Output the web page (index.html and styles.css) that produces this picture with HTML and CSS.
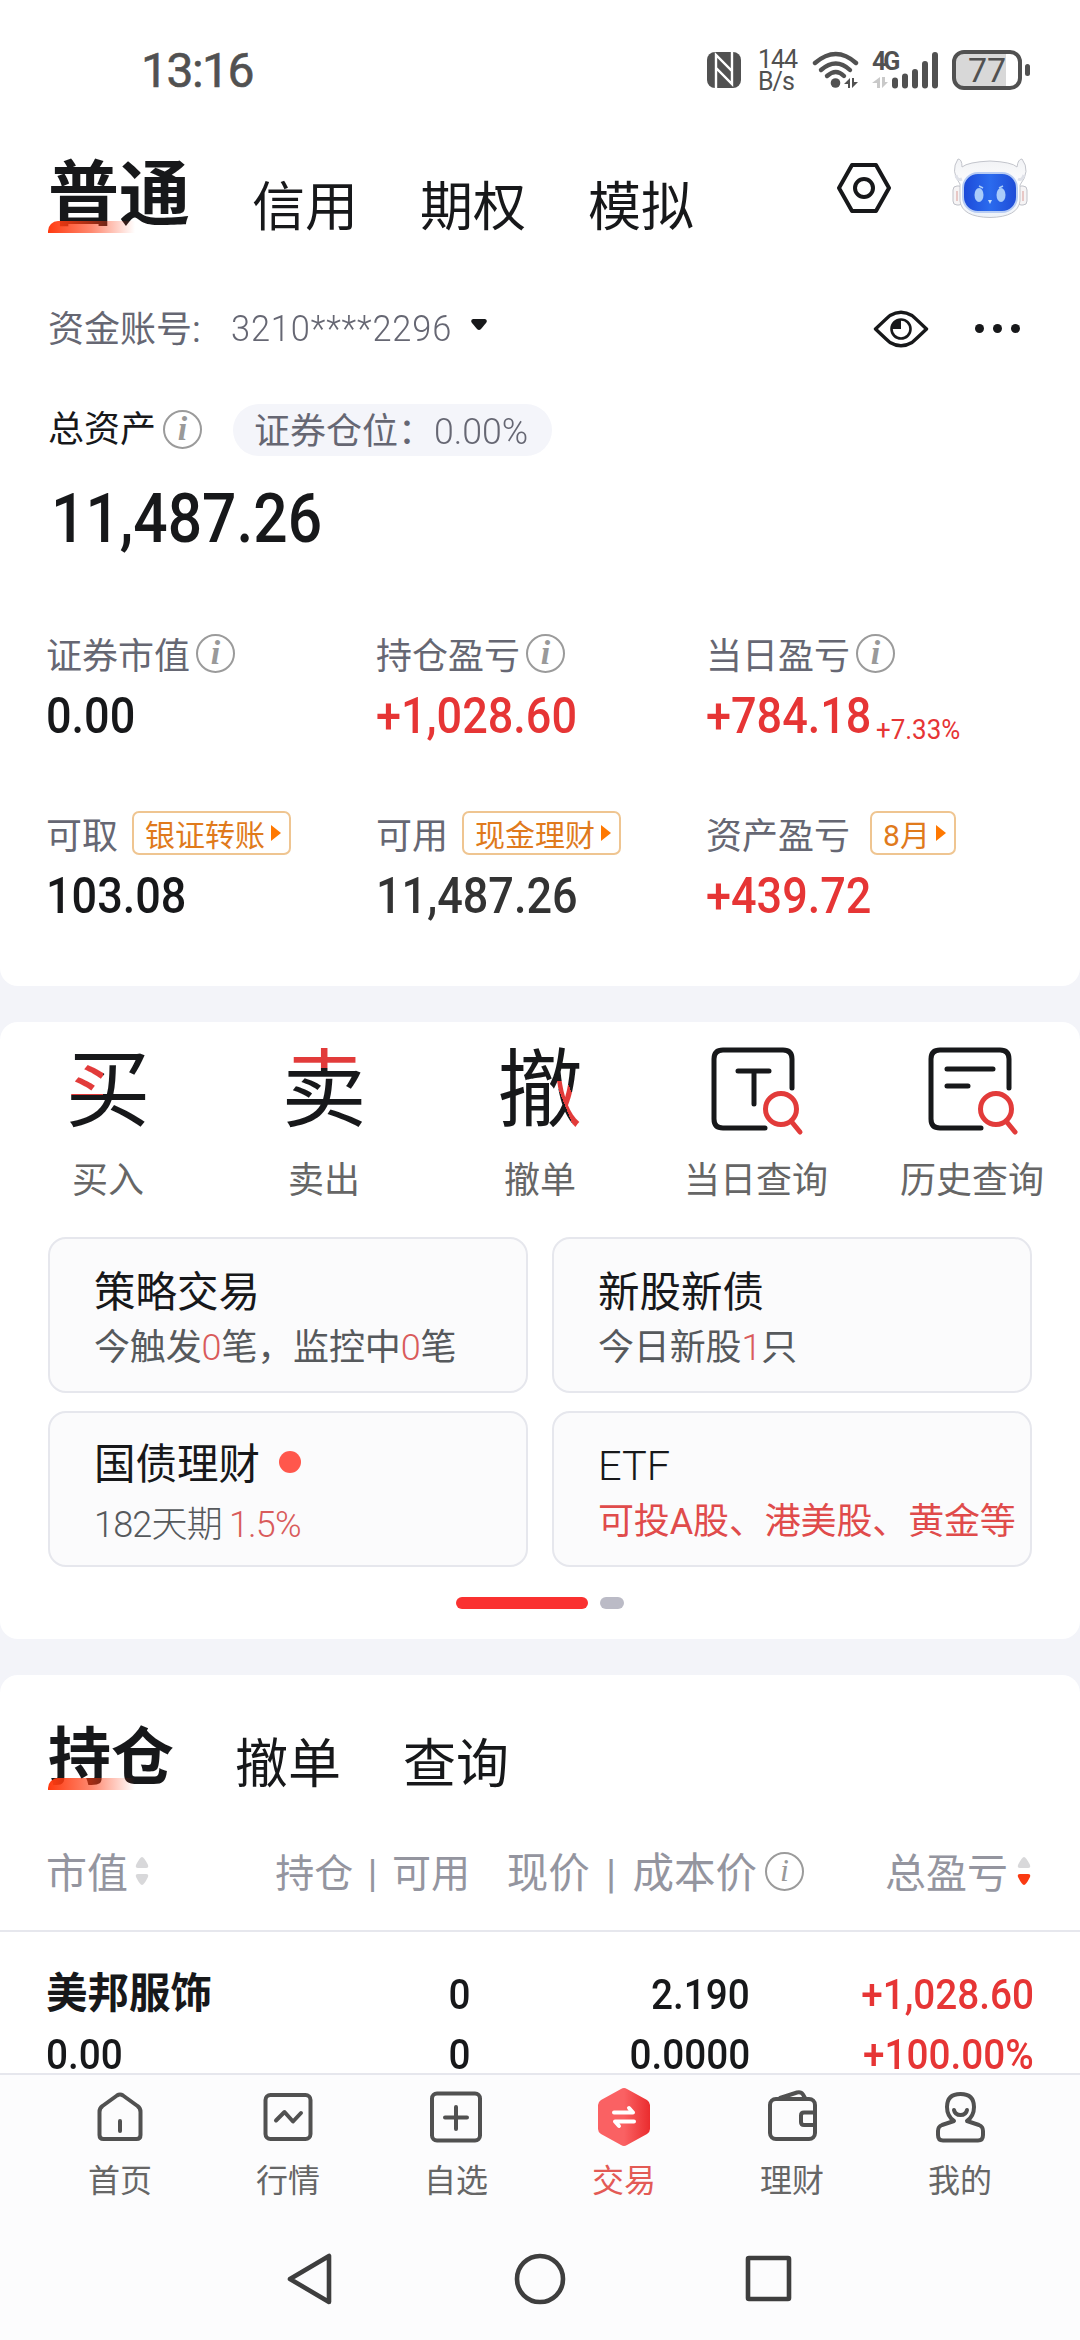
FILE: index.html
```
<!DOCTYPE html>
<html lang="zh-CN">
<head>
    <meta charset="UTF-8">
    <meta name="viewport" content="width=device-width, initial-scale=1.0">
    <title>交易</title>
    <link rel="stylesheet" href="styles.css">
</head>
<body>

    <div class="card account">
        <div class="status-bar">
            <div class="clock">13:16</div>
            <div class="status-icons">
                <svg class="nfc" width="34" height="36" viewBox="0 0 34 36">
                    <rect x="0" y="0" width="34" height="36" rx="8" fill="#515151"/>
                    <path d="M9 36V3l16 16V8M25 0v32L9 16v12" fill="none" stroke="#fff" stroke-width="2.4"/>
                </svg>
                <div class="speed"><div>144</div><div>B/s</div></div>
                <svg class="wifi" width="48" height="38" viewBox="0 0 48 38">
                    <g fill="none" stroke="#515151" stroke-width="4.4" stroke-linecap="round">
                        <path d="M3 12Q24-6 44 12"/>
                        <path d="M9 19Q24 6 38 19"/>
                        <path d="M15 25Q24 17 32 25"/>
                    </g>
                    <circle cx="23.500" cy="32" r="4.800" fill="#515151"/>
                    <path d="M38 27v10h-2v-4h-4zM40 27v10l6-6h-4v-4z" fill="#515151"/>
                </svg>
                <div class="mobile">
                    <span class="net">4G</span>
                    <svg width="68" height="38" viewBox="0 0 68 38">
                        <path d="M8 26v11H5v-5H0zM10 26v11l6-6h-3v-5z" fill="#c9c9c9"/>
                        <g stroke="#515151" stroke-width="6" stroke-linecap="round">
                            <path d="M23 29.500v5M33 25.500v9M43 21v13.500M53 13v21.500M63 4v30.500"/>
                        </g>
                    </svg>
                </div>
                <div class="battery"><span>77</span></div>
                <div class="battery-tip"></div>
            </div>
        </div>

        <div class="top-tabs">
            <div class="tab active">普通</div>
            <div class="tab">信用</div>
            <div class="tab">期权</div>
            <div class="tab">模拟</div>
            <svg class="setting" width="54" height="50" viewBox="0 0 54 50" fill="none" stroke="#17181a" stroke-width="4" stroke-linejoin="round">
                <path d="M15 2h24l13 23-13 23H15L2 25z"/>
                <circle cx="27" cy="25" r="9"/>
            </svg>
            <svg class="robot" width="76" height="62" viewBox="0 0 76 62">
                <defs>
                    <linearGradient id="face" x1="0" y1="0" x2="1" y2="0">
                        <stop offset="0" stop-color="#1c49d8"/>
                        <stop offset=".5" stop-color="#2b6bee"/>
                        <stop offset="1" stop-color="#1e4bd6"/>
                    </linearGradient>
                    <linearGradient id="shell" x1="0" y1="0" x2="0" y2="1">
                        <stop offset="0" stop-color="#f1f2f5"/>
                        <stop offset=".5" stop-color="#fff"/>
                        <stop offset="1" stop-color="#eef2f8"/>
                    </linearGradient>
                </defs>
                <rect x="1" y="29" width="10" height="19" rx="4" fill="#f6f4f5" stroke="#bfc1c8"/>
                <rect x="65" y="29" width="10" height="19" rx="4" fill="#f6f4f5" stroke="#bfc1c8"/>
                <path d="M5 34v10M71 34v10" stroke="#e4b9b6" stroke-width="1.500"/>
                <path d="M8 27Q-2 14 6 2Q10 2 10 10Q16 5 38 4Q60 5 65 10Q66 2 70 2Q79 14 68 28V44Q66 60 38 60.500Q10 60 8 44Z" fill="url(#shell)" stroke="#c3c5cc"/>
                <path d="M4 18Q5 24 10 22M72 18Q70 24 66 22" fill="none" stroke="#dfe1e8" stroke-width="3"/>
                <rect x="11" y="16" width="54" height="39" rx="15" fill="url(#face)" stroke="#b9cdf3" stroke-width="2"/>
                <ellipse cx="27" cy="38" rx="4.500" ry="7" fill="#a9ccfa"/>
                <ellipse cx="49" cy="38" rx="4.500" ry="7" fill="#a9ccfa"/>
                <path d="M27 29l4 2M51 29l-4 2" stroke="#a9ccfa" stroke-width="1.500"/>
                <path d="M36 43h4l-2 4z" fill="#c4ddfb"/>
            </svg>
        </div>

        <div class="account-row">
            <span class="account-label">资金账号:</span>
            <span class="num light account-no">3210****2296</span>
            <svg class="caret" width="16" height="11" viewBox="0 0 16 11"><path d="M2 0h12q3 1 1 4l-5 6q-2 2-4 0L1 4Q-1 1 2 0z" fill="#17181a"/></svg>
            <svg class="eye" width="56" height="38" viewBox="0 0 56 38">
                <path d="M2.500 19Q14 8 17 5.500Q28-1 39 5.500Q42 8 53.500 19Q42 30 39 32.500Q28 39 17 32.500Q14 30 2.500 19z" fill="none" stroke="#17181a" stroke-width="3.400" stroke-linejoin="round"/>
                <circle cx="28" cy="19" r="9.500" fill="none" stroke="#17181a" stroke-width="2.600"/>
                <path d="M28 19v-9.500A9.500 9.500 0 0 0 18.500 19z" fill="#17181a"/>
            </svg>
            <div class="dots"><i></i><i></i><i></i></div>
        </div>

        <div class="total-row">
            <span>总资产</span>
            <span class="info">i</span>
            <span class="pill">证券仓位：<span class="num light">0.00%</span></span>
        </div>
        <div class="total"><span class="num">11,487.26</span></div>

        <div class="assets">
            <div class="asset">
                <div class="label">证券市值<span class="info">i</span></div>
                <div class="value"><span class="num">0.00</span></div>
            </div>
            <div class="asset">
                <div class="label">持仓盈亏<span class="info">i</span></div>
                <div class="value red"><span class="num">+1,028.60</span></div>
            </div>
            <div class="asset">
                <div class="label">当日盈亏<span class="info">i</span></div>
                <div class="value red"><span class="num">+784.18</span><span class="num rate">+7.33%</span></div>
            </div>
            <div class="asset">
                <div class="label">可取<span class="tag">银证转账<i></i></span></div>
                <div class="value"><span class="num">103.08</span></div>
            </div>
            <div class="asset">
                <div class="label">可用<span class="tag">现金理财<i></i></span></div>
                <div class="value grey"><span class="num">11,487.26</span></div>
            </div>
            <div class="asset">
                <div class="label">资产盈亏<span class="tag month">8月<i></i></span></div>
                <div class="value red"><span class="num">+439.72</span></div>
            </div>
        </div>
    </div>

    <div class="card trade">
        <div class="actions">
            <div class="action">
                <div class="glyph buy">买</div>
                <div>买入</div>
            </div>
            <div class="action">
                <div class="glyph sell">卖</div>
                <div>卖出</div>
            </div>
            <div class="action">
                <div class="glyph cancel">撤</div>
                <div>撤单</div>
            </div>
            <div class="action">
                <div class="query">
                    <svg width="100" height="90" viewBox="0 0 100 90" fill="none" stroke-width="5" stroke-linecap="round">
                        <path d="M86 42V13Q86 4 77 4H17Q8 4 8 13V73Q8 82 17 82H59" stroke="#17181a"/>
                        <path d="M32 25H63M48 25V58" stroke="#17181a"/>
                        <circle cx="75" cy="63" r="15.500" stroke="#e23b3a"/>
                        <path d="M85 75L94 86" stroke="#e23b3a"/>
                    </svg>
                </div>
                <div>当日查询</div>
            </div>
            <div class="action">
                <div class="query">
                    <svg width="100" height="90" viewBox="0 0 100 90" fill="none" stroke-width="5" stroke-linecap="round">
                        <path d="M87 42V13Q87 4 78 4H18Q9 4 9 13V73Q9 82 18 82H59" stroke="#17181a"/>
                        <path d="M25 23H71M25 40H46" stroke="#17181a"/>
                        <circle cx="74" cy="63" r="15.500" stroke="#e23b3a"/>
                        <path d="M84 75L93 86" stroke="#e23b3a"/>
                    </svg>
                </div>
                <div>历史查询</div>
            </div>
        </div>

        <div class="entries">
            <div class="entry">
                <div class="title">策略交易</div>
                <div class="sub">今触发<b>0</b>笔，监控中<b>0</b>笔</div>
            </div>
            <div class="entry">
                <div class="title">新股新债</div>
                <div class="sub">今日新股<b>1</b>只</div>
            </div>
            <div class="entry low">
                <div class="title">国债理财<span class="dot"></span></div>
                <div class="sub">182天期 <b>1.5%</b></div>
            </div>
            <div class="entry etf">
                <div class="title">ETF</div>
                <div class="sub hot">可投A股、港美股、黄金等</div>
            </div>
        </div>
        <div class="pager"><i class="on"></i><i></i></div>
    </div>

    <div class="card holdings">
        <div class="top-tabs small">
            <div class="tab active">持仓</div>
            <div class="tab">撤单</div>
            <div class="tab">查询</div>
        </div>
        <div class="row head">
            <div class="c1"><span>市值</span><svg class="sort" width="14" height="28" viewBox="0 0 14 28"><path class="up" d="M7 0q2 0 6 8 1 3-2 3H3q-3 0-2-3Q5 0 7 0z"/><path d="M7 28q2 0 6-8 1-3-2-3H3q-3 0-2 3 4 8 6 8z"/></svg></div>
            <div class="c2"><span>持仓 | 可用</span></div>
            <div class="c3"><span>现价 | 成本价</span><span class="info">i</span></div>
            <div class="c4"><span>总盈亏</span><svg class="sort desc" width="14" height="28" viewBox="0 0 14 28"><path class="up" d="M7 0q2 0 6 8 1 3-2 3H3q-3 0-2-3Q5 0 7 0z"/><path d="M7 28q2 0 6-8 1-3-2-3H3q-3 0-2 3 4 8 6 8z"/></svg></div>
        </div>
        <div class="row stock">
            <div class="name">美邦服饰</div>
            <div><span class="num">0</span></div>
            <div><span class="num">2.190</span></div>
            <div class="red"><span class="num">+1,028.60</span></div>
            <div class="left"><span class="num">0.00</span></div>
            <div><span class="num">0</span></div>
            <div><span class="num">0.0000</span></div>
            <div class="red"><span class="num">+100.00%</span></div>
        </div>
    </div>

    <div class="bottom">
        <div class="tabbar">
            <div class="item">
                <svg width="60" height="60" viewBox="0 0 60 60">
                    <path d="M9.500 25q0-4 3-6L27 8.500q3-2 6 0L47.500 19q3 2 3 6V48q0 4-4 4H13.500q-4 0-4-4zM30 34V44"/>
                </svg>
                首页
            </div>
            <div class="item">
                <svg width="60" height="60" viewBox="0 0 60 60">
                    <rect x="7.500" y="8" width="45" height="44" rx="5"/>
                    <path d="M18 33.500L26.500 25L35 34.500L43 26"/>
                </svg>
                行情
            </div>
            <div class="item">
                <svg width="60" height="60" viewBox="0 0 60 60">
                    <rect x="6" y="6.500" width="48" height="47" rx="5"/>
                    <path d="M19 30.500H41M30 20V42"/>
                </svg>
                自选
            </div>
            <div class="item on">
                <svg width="60" height="60" viewBox="0 0 60 60">
                    <defs>
                        <linearGradient id="hex">
                            <stop offset=".5" stop-color="#fa6163"/>
                            <stop offset="1" stop-color="#ea2c2e"/>
                        </linearGradient>
                    </defs>
                    <path d="M27 2q3-2 6 0l20 11q3 2 3 5v24q0 3-3 5L33 58q-3 2-6 0L7 47q-3-2-3-5V18q0-3 3-5z" fill="url(#hex)" stroke="none"/>
                    <path d="M20 25.500H39L35 21M40 34.500H21L25 39" stroke="#fff"/>
                </svg>
                交易
            </div>
            <div class="item">
                <svg width="60" height="60" viewBox="0 0 60 60">
                    <rect x="8" y="12" width="45" height="40" rx="6"/>
                    <path d="M52 25.500H42q-3 0-3 3V35q0 3 3 3H52M18 11L35 5.500q4-1 6 2L43 11"/>
                </svg>
                理财
            </div>
            <div class="item">
                <svg width="60" height="60" viewBox="0 0 60 60">
                    <path d="M24 34Q17 29 17 20Q17 7 30.500 7Q44 7 44 20Q44 29 37 34L49 38q4 1.500 4 6v4q0 5.500-5 5.500H13q-5 0-5-5.500v-4q0-4.500 4-6z"/>
                    <path d="M24 23q1 5 6.500 5t6.500-5"/>
                </svg>
                我的
            </div>
        </div>
        <div class="nav">
            <svg width="54" height="54" viewBox="0 0 54 54"><path d="M45 4V50L6 27z"/></svg>
            <svg width="54" height="54" viewBox="0 0 54 54"><circle cx="27" cy="27" r="23"/></svg>
            <svg width="54" height="54" viewBox="0 0 54 54"><rect x="6" y="6" width="41" height="41" rx="1"/></svg>
        </div>
    </div>

</body>
</html>
```
FILE: styles.css
```
* { box-sizing: border-box; }
body { margin: 0; width: 1080px; height: 2340px; overflow: hidden; background: #f3f4f9; color: #17181a; font-family: Roboto, "Noto Sans CJK SC", sans-serif; font-size: 36px; }
svg { display: block; flex: none; }
.card { background: #fff; border-radius: 18px; }
.red { color: #e63535; }
.num { display: inline-block; transform: scaleX(.9); transform-origin: left center; }
.light { font-weight: 300; }
.info { flex: none; width: 39px; height: 39px; border: 2px solid #9b9b9b; border-radius: 50%; color: #999; font: italic bold 34px/33px "Liberation Serif", serif; text-align: center; }

/* status bar */
.status-bar { display: flex; justify-content: space-between; align-items: center; height: 140px; padding: 0 50px 0 141px; color: #515151; }
.clock { font-size: 48px; letter-spacing: -1.5px; -webkit-text-stroke: .6px #515151; }
.status-icons { display: flex; align-items: center; height: 40px; }
.speed { width: 40px; margin: 1px 0 0 17px; font-size: 25px; line-height: 22px; letter-spacing: -1px; }
.wifi { margin-left: 14px; }
.mobile { position: relative; margin-left: 12px; }
.net { position: absolute; left: 0; top: -3px; font-size: 25px; font-weight: 700; line-height: 28px; letter-spacing: -3px; }
.battery { width: 70px; height: 40px; margin-left: 12px; border: 4px solid #515151; border-radius: 12px; background: linear-gradient(90deg, #d8d8d8 80%, #fff 80%); font-size: 34px; font-weight: 400; line-height: 33px; text-align: center; }
.battery-tip { width: 5px; height: 12px; margin-left: 3px; border-radius: 3px; background: #515151; }

/* tabs */
.top-tabs { display: flex; align-items: center; height: 108px; padding: 0 52px 0 48px; white-space: nowrap; }
.tab { margin: 28px 0 0 62px; font-size: 53px; line-height: 72px; }
.tab.active { position: relative; width: 142px; margin: 2px 0 0 0; font-size: 71px; font-weight: 700; }
.tab.active::after { content: ""; position: absolute; left: 0; bottom: -2px; width: 87px; height: 12px; border-radius: 10px 0 0 0; background: linear-gradient(90deg, #ff3a10, rgba(255, 58, 16, .6) 50%, rgba(255, 58, 16, 0)); }
.setting { margin: -12px 0 0 auto; }
.robot { margin: -12px 0 0 61px; }

/* account */
.account { height: 986px; border-radius: 0 0 18px 18px; }
.account-row { display: flex; align-items: center; height: 156px; padding: 5px 60px 0 48px; color: #666773; }
.account-label { width: 183px; margin-top: -5px; }
.account-no { width: 240px; font-size: 37px; letter-spacing: .9px; transform: scaleX(.93); }
.caret { margin: -8px 0 0 0; }
.eye { margin-left: auto; }
.dots { display: flex; gap: 9px; margin-left: 46px; }
.dots i { width: 9px; height: 9px; border-radius: 50%; background: #17181a; }
.total-row { display: flex; align-items: center; height: 52px; padding: 0 48px; line-height: 50px; }
.total-row .info { margin: -2px 0 0 7px; line-height: 33px; }
.pill { width: 319px; height: 52px; margin-left: 31px; padding-left: 21px; border-radius: 26px; background: #f4f5fa; color: #666773; line-height: 56px; white-space: nowrap; }
.pill .num { transform: scaleX(.99); }
.total { height: 124px; padding-left: 51px; font-size: 68px; font-weight: 500; line-height: 126px; }
.total .num { transform: scaleX(.89); }
.assets { display: grid; grid-template-columns: 330px 330px 1fr; row-gap: 66px; padding: 51px 0 0 46px; }
.label { display: flex; align-items: center; height: 44px; margin-bottom: 10px; color: #666773; }
.label .info { margin-left: 6px; }
.value { height: 60px; font-size: 50px; font-weight: 500; line-height: 63px; white-space: nowrap; }
.value.grey { color: #333; }
.rate { margin-left: -14px; font-size: 27px; font-weight: 400; transform: translateY(6px) scaleX(.96); }
.tag { display: flex; align-items: center; height: 44px; margin-left: 14px; padding: 0 8px 0 11px; border: 2px solid #efc591; border-radius: 7px; color: #e07a1c; font-size: 30px; }
.tag i { width: 0; height: 0; margin-left: 6px; border-left: 10px solid #ff7800; border-top: 8px solid transparent; border-bottom: 8px solid transparent; }
.tag.month { margin-left: 20px; }

/* trade */
.trade { height: 617px; margin-top: 36px; padding-top: 24px; }
.actions { display: grid; grid-template-columns: repeat(5, 216px); color: #666; line-height: 44px; text-align: center; }
.glyph { height: 90px; margin-bottom: 23px; color: transparent; font-size: 85px; line-height: 90px; background-color: #17181a; background-repeat: no-repeat; -webkit-background-clip: text; background-clip: text; }
.buy { background-image: linear-gradient(#e23b3a, #e23b3a); background-size: 36px 30px; background-position: 67px 19px; }
.sell { background-image: linear-gradient(#e23b3a, #e23b3a); background-size: 90px 22px; background-position: 63px 0; }
.cancel { background-image: linear-gradient(68deg, transparent 40%, #e23b3a 40%, #e23b3a 64%, transparent 64%); background-size: 28px 54px; background-position: 125px 35px; }
.query { display: flex; justify-content: center; height: 90px; margin-bottom: 23px; }
.entries { display: grid; grid-template-columns: 480px 480px; gap: 18px 24px; padding: 34px 48px 0; }
.entry { height: 156px; padding: 27px 0 0 44px; border: 2px solid #e6e7ed; border-radius: 18px; background: #fbfbfc; white-space: nowrap; }
.title { display: flex; align-items: center; font-size: 41.5px; line-height: 54px; }
.sub { color: #56595c; line-height: 56px; letter-spacing: -.15px; }
.sub b { color: #d95b5b; font-weight: 300; }
.sub.hot { color: #e04b4b; }
.low, .etf { padding-top: 25px; }
.low .sub { padding-top: 5px; font-weight: 300; letter-spacing: -.8px; word-spacing: -1px; }
.etf .title { padding-top: 1px; font-weight: 300; }
.etf .sub { padding-top: 1px; }
.dot { width: 22px; height: 22px; margin: -7px 0 0 19px; border-radius: 50%; background: #ff574c; }
.pager { display: flex; justify-content: center; gap: 12px; margin-top: 30px; }
.pager i { width: 24px; height: 12px; border-radius: 6px; background: #bbbbc6; }
.pager .on { width: 132px; background: #fa3130; }

/* holdings */
.holdings { height: 398px; margin-top: 36px; border-radius: 18px 18px 0 0; overflow: hidden; }
.small { height: 140px; padding-top: 22px; }
.small .tab { margin-top: 18px; }
.small .tab.active { width: 125px; margin-top: 4px; font-size: 63px; }
.small .tab.active::after { bottom: 4px; }
.row { display: grid; grid-template-columns: 200px 224px 280px 284px; padding-left: 46px; }
.head { align-items: center; height: 115px; color: #94959f; font-size: 41px; white-space: nowrap; }
.head > div { display: flex; align-items: center; justify-content: flex-end; }
.head > div > span:first-child { margin-top: -6px; }
.head .c1 { justify-content: flex-start; }
.head .c2 { font-size: 39px; word-spacing: 5px; }
.head .c3 { font-size: 41.5px; word-spacing: 6px; }
.head .c3 .info { margin: -3px -54px 0 8px; font-size: 32px; font-weight: 400; }
.sort { margin: -4px 0 0 7px; fill: #d8d8da; }
.desc { margin: -4px 3px 0 9px; fill: #fa3a12; }
.desc .up { fill: #d8d8da; }
.stock { padding-top: 32px; border-top: 2px solid #e6e7ed; font-size: 43px; line-height: 60px; text-align: right; }
.stock .num { font-weight: 500; transform-origin: right center; }
.stock .left, .stock .name { text-align: left; }
.stock .left .num { transform-origin: left center; }
.name { font-size: 41.5px; font-weight: 700; }

/* bottom bar */
.bottom { height: 267px; border-top: 2px solid #e6e7ed; background: #fcfcfd; }
.tabbar { display: flex; height: 128px; padding: 12px 36px 0; }
.item { width: 168px; color: #666; font-size: 32px; line-height: 44px; text-align: center; }
.item svg { margin: 0 auto 12px; fill: none; stroke: #515151; stroke-width: 4; stroke-linecap: round; stroke-linejoin: round; }
.item.on { color: #e35a55; }
.nav { display: flex; justify-content: center; gap: 175px; padding-top: 49px; }
.nav svg { fill: none; stroke: #3e3e3e; stroke-width: 4.600; stroke-linejoin: round; }
```
